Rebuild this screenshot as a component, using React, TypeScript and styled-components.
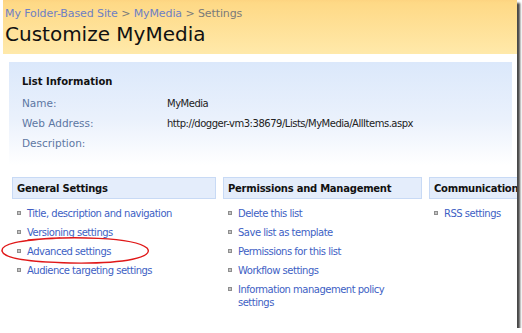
import React from "react";
import styled, { createGlobalStyle } from "styled-components";

const GlobalStyle = createGlobalStyle`
	html, body {
		margin: 0;
		padding: 0;
		background: #ffffff;
	}
	body {
		font-family: "DejaVu Sans", Verdana, sans-serif;
	}
`;

const Frame = styled.div`
	position: relative;
	width: 517px;
	height: 328px;
	background: #fff;
	overflow: hidden;
	box-shadow: 3px 3px 2px rgba(40, 40, 40, 0.85);
`;

const Header = styled.div`
	margin-left: 3px;
	height: 54px;
	padding: 7px 0 0 2px;
	box-sizing: border-box;
	background: linear-gradient(#fdd481 0, #fed986 3px, #ffe9aa 100%);
`;

const Breadcrumb = styled.div`
	font-size: 11px;
	color: #7a7a7a;
	letter-spacing: -0.1px;
	a {
		color: #6e80c4;
		text-decoration: none;
	}
`;

const Title = styled.h1`
	margin: 2px 0 0;
	font-family: "DejaVu Sans", Verdana, sans-serif;
	font-weight: normal;
	font-size: 20px;
	color: #111;
`;

const InfoPanel = styled.div`
	margin: 8px 5px 0 9px;
	height: 103px;
	padding: 14px 0 0 13px;
	box-sizing: border-box;
	background: linear-gradient(#dbe8fb 0%, #eaf1fc 55%, #ffffff 100%);
`;

const InfoTitle = styled.div`
	font-family: "DejaVu Sans", Verdana, sans-serif;
	font-weight: bold;
	font-size: 10px;
	color: #111;
	margin-bottom: 6px;
`;

const InfoRow = styled.div`
	display: grid;
	grid-template-columns: 145px 1fr;
	height: 20px;
	align-items: center;
	font-size: 10.5px;
`;

const InfoLabel = styled.span`
	color: #5d77a3;
`;

const InfoValue = styled.span`
	color: #222;
	font-size: 10px;
	letter-spacing: -0.48px;
`;

const Columns = styled.div`
	display: grid;
	grid-template-columns: 204px 199px 200px;
	column-gap: 7px;
	margin: 12px 0 0 12px;
	align-items: start;
`;

const Column = styled.div``;

const SectionHead = styled.div`
	height: 22px;
	box-sizing: border-box;
	padding-left: 4px;
	display: flex;
	align-items: center;
	background: #e4edfb;
	border: 1px solid #c8daf5;
	font-weight: bold;
	font-size: 10px;
	letter-spacing: -0.25px;
	color: #111;
	white-space: nowrap;
`;

const LinkList = styled.ul`
	list-style: none;
	margin: 8px 0 0;
	padding: 0 0 0 5px;
`;

const LinkItem = styled.li`
	display: flex;
	align-items: flex-start;
	min-height: 19px;
	font-size: 10px;
	line-height: 13px;
	color: #3e5fc4;
	letter-spacing: -0.5px;
`;

const Bullet = styled.span`
	flex: none;
	width: 4px;
	height: 4px;
	margin: 4px 6px 0 0;
	background: #c4c4c4;
	border: 1px solid #8e8e8e;
	box-sizing: border-box;
`;

const Scribble = styled.svg`
	position: absolute;
	left: 0;
	top: 232px;
	pointer-events: none;
`;

const general = [
	"Title, description and navigation",
	"Versioning settings",
	"Advanced settings",
	"Audience targeting settings",
];

const permissions = [
	"Delete this list",
	"Save list as template",
	"Permissions for this list",
	"Workflow settings",
	"Information management policy settings",
];

const communications = ["RSS settings"];

const Links: React.FC<{ items: string[] }> = ({ items }) => (
	<LinkList>
		{items.map((item) => (
			<LinkItem key={item}>
				<Bullet />
				<span>{item}</span>
			</LinkItem>
		))}
	</LinkList>
);

export default function App() {
	return (
		<>
			<GlobalStyle />
			<Frame>
				<Header>
					<Breadcrumb>
						<a>My Folder-Based Site</a> &gt; <a>MyMedia</a> &gt; Settings
					</Breadcrumb>
					<Title>Customize MyMedia</Title>
				</Header>

				<InfoPanel>
					<InfoTitle>List Information</InfoTitle>
					<InfoRow>
						<InfoLabel>Name:</InfoLabel>
						<InfoValue>MyMedia</InfoValue>
					</InfoRow>
					<InfoRow>
						<InfoLabel>Web Address:</InfoLabel>
						<InfoValue>http://dogger-vm3:38679/Lists/MyMedia/AllItems.aspx</InfoValue>
					</InfoRow>
					<InfoRow>
						<InfoLabel>Description:</InfoLabel>
						<InfoValue />
					</InfoRow>
				</InfoPanel>

				<Columns>
					<Column>
						<SectionHead>General Settings</SectionHead>
						<Links items={general} />
					</Column>
					<Column>
						<SectionHead>Permissions and Management</SectionHead>
						<Links items={permissions} />
					</Column>
					<Column>
						<SectionHead>Communications</SectionHead>
						<Links items={communications} />
					</Column>
				</Columns>

				{/* hand-drawn red ring around "Advanced settings" */}
				<Scribble width="160" height="36" viewBox="0 0 160 36">
					<path
						d="M 28 8 C 70 4, 134 5, 147 16 C 155 25, 126 32, 70 31 C 30 30, 4 27, 2 19 C 1 12, 18 8, 60 6"
						fill="none"
						stroke="#e01818"
						strokeWidth="1.4"
						strokeLinecap="round"
					/>
				</Scribble>
			</Frame>
		</>
	);
}
